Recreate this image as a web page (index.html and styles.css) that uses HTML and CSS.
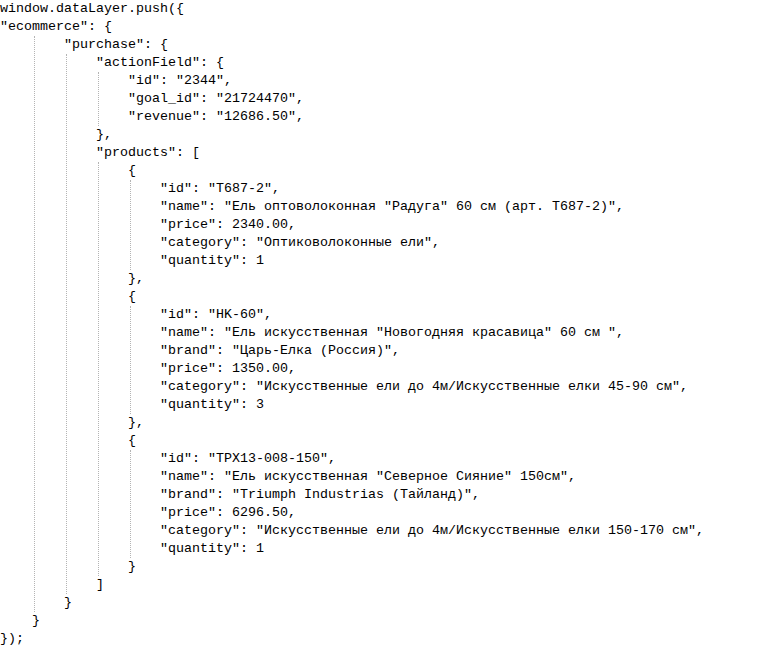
FILE: index.html
```html
<!DOCTYPE html>
<html>
<head>
<meta charset="utf-8">
<link rel="stylesheet" href="styles.css">
</head>
<body>
<div class="code">
<div class="ln">window.dataLayer.push({</div>
<div class="ln">"ecommerce": {</div>
<div class="blk top">
  <div class="ln">"purchase": {</div>
  <div class="blk">
    <div class="ln">"actionField": {</div>
    <div class="blk">
      <div class="ln">"id": "2344",</div>
      <div class="ln">"goal_id": "21724470",</div>
      <div class="ln">"revenue": "12686.50",</div>
    </div>
    <div class="ln">},</div>
    <div class="ln">"products": [</div>
    <div class="blk">
      <div class="ln">{</div>
      <div class="blk">
        <div class="ln">"id": "T687-2",</div>
        <div class="ln">"name": "Ель оптоволоконная "Радуга" 60 см (арт. T687-2)",</div>
        <div class="ln">"price": 2340.00,</div>
        <div class="ln">"category": "Оптиковолоконные ели",</div>
        <div class="ln">"quantity": 1</div>
      </div>
      <div class="ln">},</div>
      <div class="ln">{</div>
      <div class="blk">
        <div class="ln">"id": "HK-60",</div>
        <div class="ln">"name": "Ель искусственная "Новогодняя красавица" 60 см ",</div>
        <div class="ln">"brand": "Царь-Елка (Россия)",</div>
        <div class="ln">"price": 1350.00,</div>
        <div class="ln">"category": "Искусственные ели до 4м/Искусственные елки 45-90 см",</div>
        <div class="ln">"quantity": 3</div>
      </div>
      <div class="ln">},</div>
      <div class="ln">{</div>
      <div class="blk">
        <div class="ln">"id": "TPX13-008-150",</div>
        <div class="ln">"name": "Ель искусственная "Северное Сияние" 150см",</div>
        <div class="ln">"brand": "Triumph Industrias (Тайланд)",</div>
        <div class="ln">"price": 6296.50,</div>
        <div class="ln">"category": "Искусственные ели до 4м/Искусственные елки 150-170 см",</div>
        <div class="ln">"quantity": 1</div>
      </div>
      <div class="ln">}</div>
    </div>
    <div class="ln">]</div>
  </div>
  <div class="ln">}</div>
</div>
<div class="ln i4">}</div>
<div class="ln">});</div>
</div>
</body>
</html>
```

FILE: styles.css
```css
html, body {
  margin: 0;
  padding: 0;
  background: #ffffff;
}

.code {
  font-family: "Liberation Mono", "Courier New", monospace;
  font-size: 13.333px;
  line-height: 18px;
  color: #000000;
}

.ln {
  white-space: pre;
  height: 18px;
}

.blk {
  margin-left: 2px;
  border-left: 1px dotted #b4b4b4;
  padding-left: 29px;
}

.blk.top {
  margin-left: 34px;
}

.i4 {
  padding-left: 32px;
}
```
